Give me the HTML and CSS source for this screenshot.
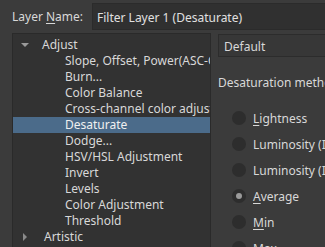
FILE: index.html
```html
<!DOCTYPE html>
<html>
<head>
    <title>Filter Layer</title>
    <link rel="stylesheet" href="styles.css">
</head>
<body>
    <div class="dialog">
        <div class="name-row">
            <label class="name-label">Layer <u>N</u>ame:</label>
            <div class="name-input">Filter Layer 1 (Desaturate)</div>
        </div>
        <div class="main">
            <div class="tree">
                <div class="row group"><span class="arrow down"></span>Adjust</div>
                <div class="row child">Slope, Offset, Power(ASC-CDL)</div>
                <div class="row child">Burn...</div>
                <div class="row child">Color Balance</div>
                <div class="row child">Cross-channel color adjustment</div>
                <div class="row child selected">Desaturate</div>
                <div class="row child">Dodge...</div>
                <div class="row child">HSV/HSL Adjustment</div>
                <div class="row child">Invert</div>
                <div class="row child">Levels</div>
                <div class="row child">Color Adjustment</div>
                <div class="row child">Threshold</div>
                <div class="row group"><span class="arrow right"></span>Artistic</div>
            </div>
            <div class="panel">
                <div class="combo">Default</div>
                <div class="method-label">Desaturation method:</div>
                <div class="radios">
                    <div class="radio"><span class="dot"></span><u>L</u>ightness</div>
                    <div class="radio"><span class="dot"></span>Luminosity (ITU-R BT.709)</div>
                    <div class="radio"><span class="dot"></span>Luminosity (ITU-R BT.601)</div>
                    <div class="radio"><span class="dot checked"></span><u>A</u>verage</div>
                    <div class="radio"><span class="dot"></span><u>M</u>in</div>
                    <div class="radio"><span class="dot"></span>Max</div>
                </div>
            </div>
        </div>
    </div>
</body>
</html>
```
FILE: styles.css
```css
body {
    margin: 0;
    background-color: #3b3b3b;
    font-family: "Noto Sans", "Open Sans", sans-serif;
    font-size: 12px;
    color: #d8d8d8;
    overflow: hidden;
}

.dialog {
    width: 420px;
    height: 247px;
}

u {
    text-decoration-thickness: 1px;
    text-underline-offset: 2px;
}

.name-row {
    display: flex;
    align-items: center;
    height: 29px;
    padding-top: 2px;
    padding-left: 12px;
}

.name-label {
    width: 80px;
}

.name-input {
    flex: 1;
    height: 27px;
    line-height: 27px;
    padding-left: 4px;
    background-color: #303030;
    border: 1px solid #2b2b2b;
    box-sizing: border-box;
    color: #e0e0e0;
}

.main {
    display: flex;
    margin-top: 2px;
}

.tree {
    margin-left: 12px;
    width: 199px;
    height: 230px;
    box-sizing: border-box;
    background-color: #323232;
    border: 1px solid #2a2a2a;
    padding-top: 3px;
    overflow: hidden;
}

.row {
    height: 16px;
    line-height: 16px;
    white-space: nowrap;
    display: flex;
    align-items: center;
}

.group {
    padding-left: 8px;
}

.child {
    padding-left: 52px;
}

.selected {
    background-color: #4b6b8a;
    color: #f0f0f0;
}

.arrow {
    width: 0;
    height: 0;
    border-style: solid;
}

.arrow.down {
    border-width: 4px 4px 0 4px;
    border-color: #9a9a9a transparent transparent transparent;
    margin-right: 13px;
}

.arrow.right {
    margin-left: 2px;
    border-width: 4px 0 4px 4px;
    border-color: transparent transparent transparent #8a8a8a;
    margin-right: 17px;
}

.panel {
    margin-left: 7px;
    flex: 1;
}

.combo {
    height: 23px;
    line-height: 23px;
    padding-left: 5px;
    background-color: #373737;
    border: 1px solid #2c2c2c;
    box-sizing: border-box;
    margin-top: 1px;
}

.method-label {
    margin-top: 18px;
    height: 16px;
    line-height: 16px;
    white-space: nowrap;
}

.radios {
    display: flex;
    flex-direction: column;
    gap: 10px;
    margin-top: 19px;
    padding-left: 14px;
}

.radio {
    display: flex;
    align-items: center;
    height: 16px;
    white-space: nowrap;
}

.dot {
    width: 14px;
    height: 14px;
    border-radius: 50%;
    background-color: #2d2d2d;
    margin-right: 7px;
    position: relative;
}

.dot.checked::after {
    content: "";
    position: absolute;
    left: 4px;
    top: 4px;
    width: 6px;
    height: 6px;
    border-radius: 50%;
    background-color: #9a9a9a;
}
```
